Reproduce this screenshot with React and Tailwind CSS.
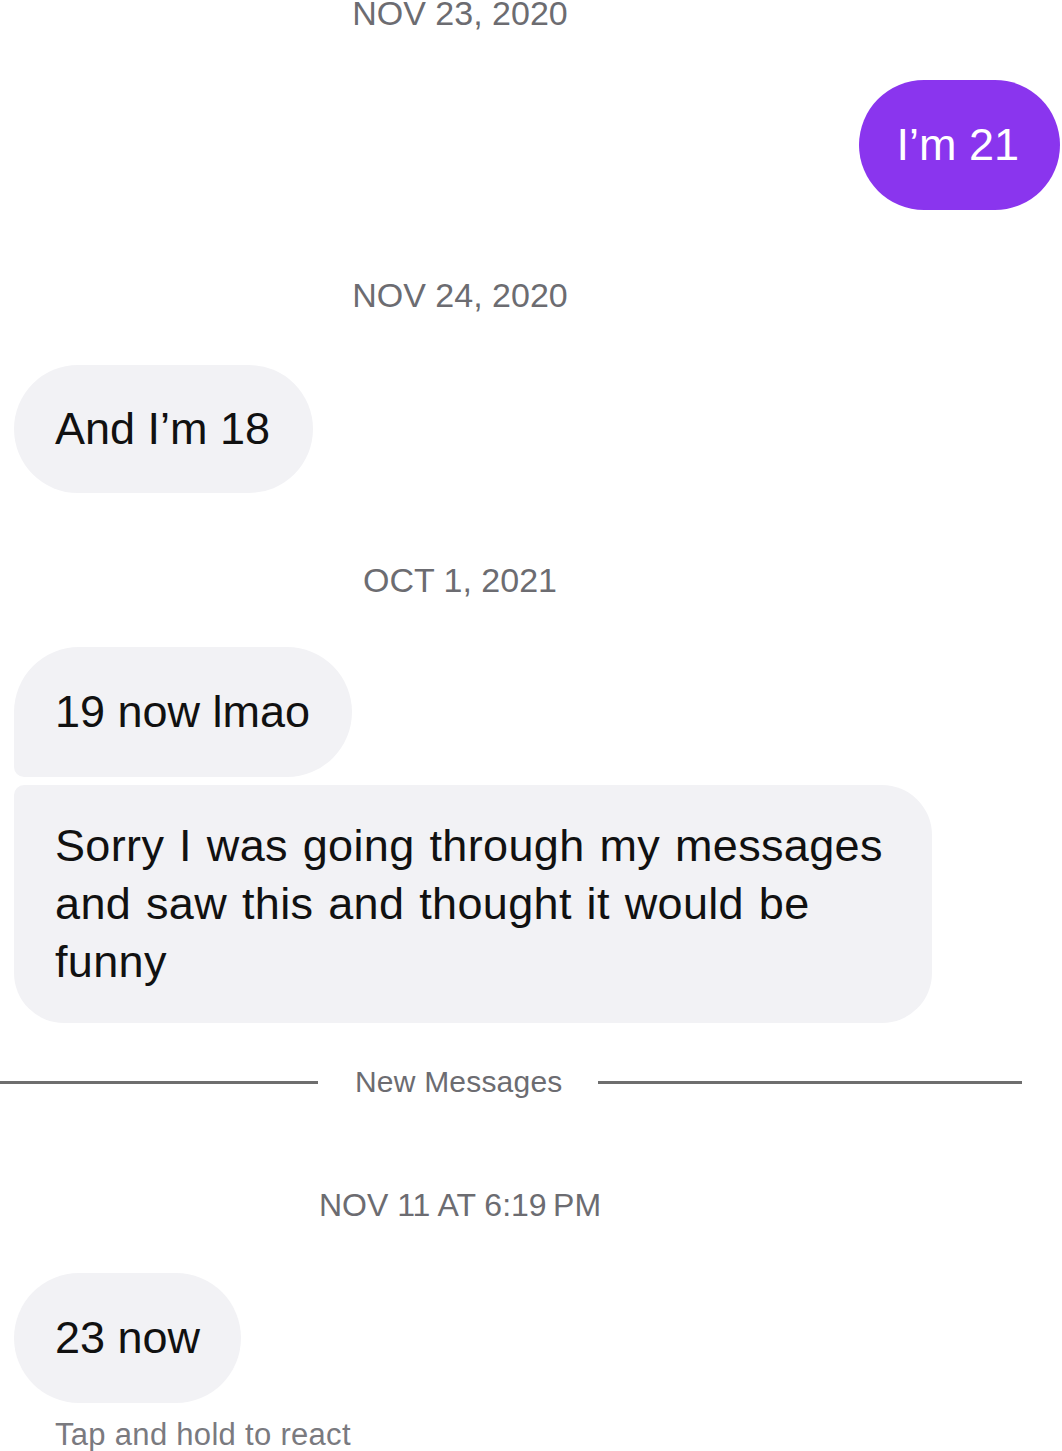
import React from "react";

const font = { fontFamily: '"Liberation Sans", Arial, sans-serif' };

function Stamp({ children, className = "" }) {
  return (
    <div className={`w-[920px] h-[32px] leading-[32px] text-center text-[#6c6c71] ${className}`}>
      {children}
    </div>
  );
}

export default function App() {
  return (
    <div className="w-[1062px] h-[1451px] overflow-hidden bg-white flex flex-col" style={font}>
      <Stamp className="mt-[-3px] text-[34px]">NOV 23, 2020</Stamp>

      <div className="mt-[51px] flex justify-end pr-[2px]">
        <div className="h-[130px] pl-[37px] pr-[41px] flex items-center rounded-full bg-[#8a35ee] text-white text-[45px]">
          I’m 21
        </div>
      </div>

      <Stamp className="mt-[69px] text-[34px]">NOV 24, 2020</Stamp>

      <div className="mt-[54px] ml-[14px] flex">
        <div className="h-[128px] pl-[41px] pr-[43px] flex items-center rounded-full bg-[#f2f2f5] text-[#111] text-[45px]">
          And I’m 18
        </div>
      </div>

      <Stamp className="mt-[71px] text-[34px]">OCT 1, 2021</Stamp>

      <div className="mt-[51px] ml-[14px] flex">
        <div className="h-[130px] pl-[41px] pr-[42px] flex items-center rounded-[65px] rounded-bl-[10px] bg-[#f2f2f5] text-[#111] text-[45px]">
          19 now lmao
        </div>
      </div>

      <div className="mt-[8px] ml-[14px] flex">
        <div className="w-[918px] h-[238px] pl-[41px] pr-[40px] flex flex-col justify-center rounded-[50px] rounded-tl-[10px] bg-[#f2f2f5] text-[#111] text-[45px] leading-[58px] tracking-[0.35px] [word-spacing:2px]">
          <span>Sorry I was going through my messages</span>
          <span>and saw this and thought it would be</span>
          <span>funny</span>
        </div>
      </div>

      <div className="mt-[43px] h-[32px] flex items-center pr-[40px]">
        <div className="w-[318px] h-[3px] bg-[#6e6e6e]" />
        <div className="ml-[37px] text-[30px] tracking-[0.2px] text-[#6c6c71] leading-[32px] whitespace-nowrap">New Messages</div>
        <div className="ml-[36px] flex-1 h-[3px] bg-[#6e6e6e]" />
      </div>

      <Stamp className="mt-[91px] text-[32px]">NOV 11 AT 6:19&#8201;PM</Stamp>

      <div className="mt-[52px] ml-[14px] flex">
        <div className="h-[130px] pl-[41px] pr-[41px] flex items-center rounded-full bg-[#f2f2f5] text-[#111] text-[45px]">
          23 now
        </div>
      </div>

      <div className="mt-[16px] ml-[55px] h-[32px] leading-[32px] text-[31px] tracking-[0.3px] text-[#7a7a7f] whitespace-nowrap">
        Tap and hold to react
      </div>
    </div>
  );
}
